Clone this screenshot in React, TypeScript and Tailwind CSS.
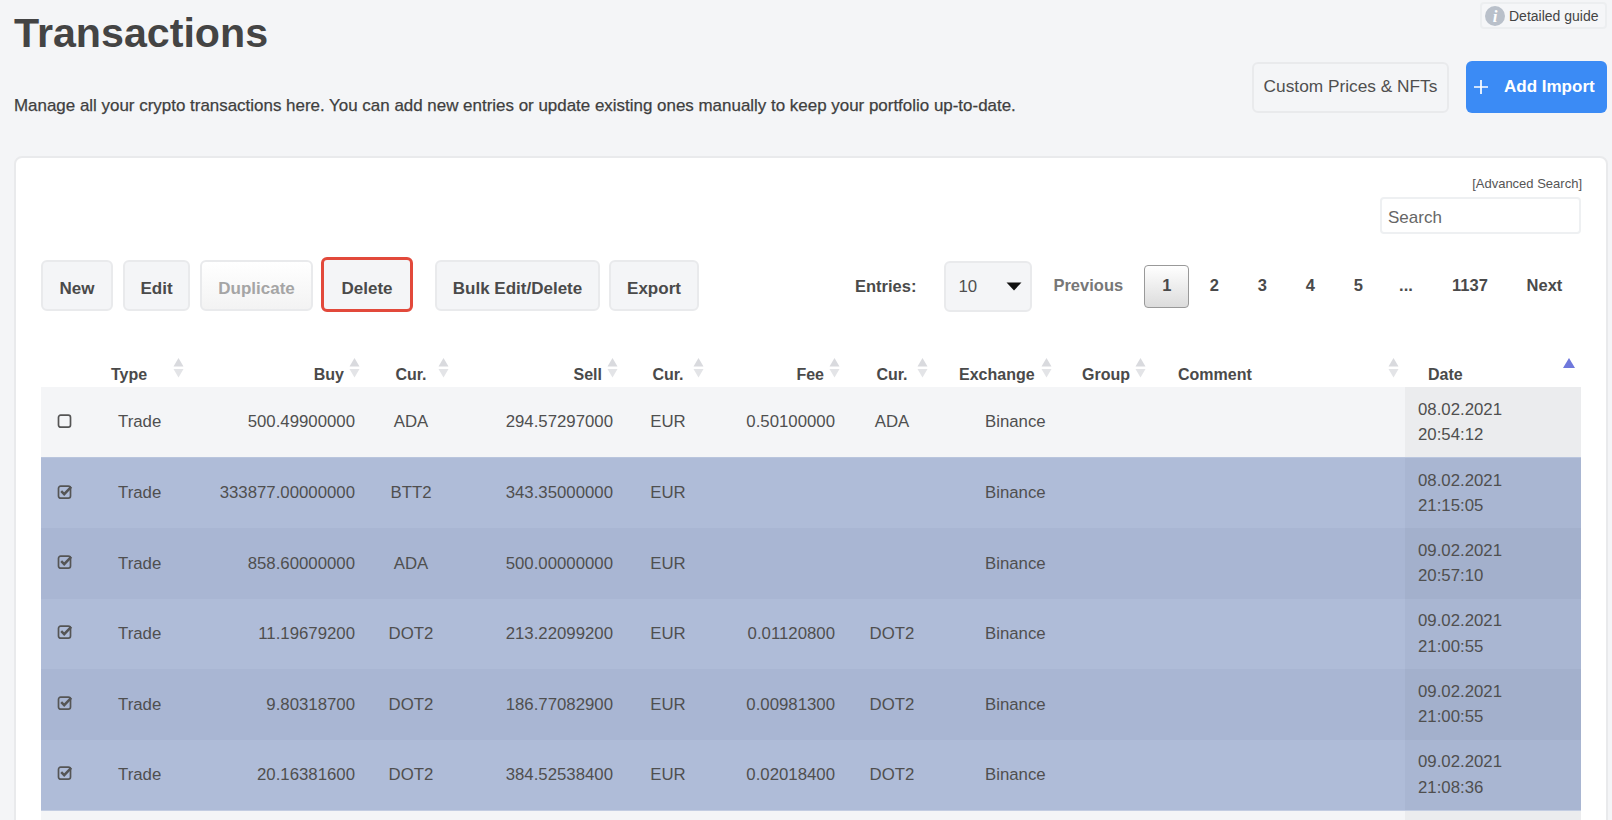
const font = "[font-family:'Liberation_Sans',Arial,sans-serif]";

function Info() {
  return (
    <svg width="20" height="20" viewBox="0 0 20 20" className="shrink-0">
      <circle cx="10" cy="10" r="10" fill="#b9c0ca" />
      <text x="10" y="16" textAnchor="middle" fontFamily="'Liberation Serif',serif" fontStyle="italic" fontWeight="700" fontSize="17" fill="#fff">i</text>
    </svg>
  );
}

function SortArrows({ right }: { right: string }) {
  return (
    <svg width="11" height="20" viewBox="0 0 11 20" className={`absolute top-[10px] ${right}`}>
      <path d="M5.5 0 L10.5 8.5 L0.5 8.5 Z" fill="#d9dade" />
      <path d="M5.5 19.5 L10.5 11 L0.5 11 Z" fill="#e3e4e7" />
    </svg>
  );
}

function Check({ on }: { on: boolean }) {
  return (
    <svg width="16" height="16" viewBox="0 0 16 16" className="block ml-[16px] -mt-[3px]">
      <rect x="1.5" y="2.2" width="12" height="12" rx="2.2" fill="none" stroke="#555" strokeWidth="1.7" />
      {on && <path d="M4.2 7.2 L7.2 10.2 L14.2 2.8" fill="none" stroke="#555" strokeWidth="2.5" />}
    </svg>
  );
}

function Btn({ children, className = "" }: { children: React.ReactNode; className?: string }) {
  return (
    <button className={`h-[51px] pt-[7px] rounded-md border-2 border-[#e9eaec] bg-[#f4f5f7] font-bold text-[#4a4a4a] text-[17px] ${className}`}>
      {children}
    </button>
  );
}

const rows = [
  { on: false, buy: "500.49900000", c1: "ADA", sell: "294.57297000", fee: "0.50100000", c3: "ADA", d: "08.02.2021", t: "20:54:12" },
  { on: true, buy: "333877.00000000", c1: "BTT2", sell: "343.35000000", fee: "", c3: "", d: "08.02.2021", t: "21:15:05" },
  { on: true, buy: "858.60000000", c1: "ADA", sell: "500.00000000", fee: "", c3: "", d: "09.02.2021", t: "20:57:10" },
  { on: true, buy: "11.19679200", c1: "DOT2", sell: "213.22099200", fee: "0.01120800", c3: "DOT2", d: "09.02.2021", t: "21:00:55" },
  { on: true, buy: "9.80318700", c1: "DOT2", sell: "186.77082900", fee: "0.00981300", c3: "DOT2", d: "09.02.2021", t: "21:00:55" },
  { on: true, buy: "20.16381600", c1: "DOT2", sell: "384.52538400", fee: "0.02018400", c3: "DOT2", d: "09.02.2021", t: "21:08:36" },
];

const rowStyle = [
  { tr: "bg-[#f4f5f7] border-b border-[#b9c5dd]", date: "bg-[#ebecee]" },
  { tr: "bg-[#afbcd8]", date: "bg-[#a9b6d2]" },
  { tr: "bg-[#a9b6d3]", date: "bg-[#a3b0cc]" },
  { tr: "bg-[#afbcd8]", date: "bg-[#a9b6d2]" },
  { tr: "bg-[#a9b6d3]", date: "bg-[#a3b0cc]" },
  { tr: "bg-[#afbcd8] border-b border-[#c3cde2]", date: "bg-[#a9b6d2]" },
];

const widths = ["w-[59px]", "w-[87px]", "w-[176px]", "w-[96px]", "w-[162px]", "w-[94px]", "w-[128px]", "w-[98px]", "w-[123px]", "w-[96px]", "w-[245px]", "w-[176px]"];

export default function App() {
  return (
    <div className={`${font} h-[820px] overflow-hidden bg-[#f4f5f7] text-[#4f4f4f] pl-[14px] pr-[5px] relative`}>
      <div className="flex justify-between h-[156px]">
        <div>
          <h1 className="mt-[7px] text-[41.2px] leading-[52px] font-bold text-[#444]">Transactions</h1>
          <p className="mt-[34px] text-[16.95px] leading-[26px] text-[#3f3f3f] [-webkit-text-stroke:0.25px_#3f3f3f]">
            Manage all your crypto transactions here. You can add new entries or update existing ones manually to keep your portfolio up-to-date.
          </p>
        </div>
        <div className="w-[360px] flex flex-col items-end">
          <div className="mt-[2px] h-[27px] w-[127px] flex items-center gap-[3px] pl-[3px] border-2 border-[#eceef0] rounded bg-[#f5f6f8] text-[14px] text-[#444]">
            <Info />
            <span className="pt-[1px] pl-[1px]">Detailed guide</span>
          </div>
          <div className="mt-[32px] flex items-center gap-[17px]">
            <button className="h-[51px] w-[197px] rounded-md border-2 border-[#e9eaec] bg-[#f4f5f7] text-[17.3px] text-[#4f4f4f]">Custom Prices &amp; NFTs</button>
            <button className="h-[52px] w-[141px] rounded-md bg-[#3b8bf5] text-white font-bold text-[17px] flex items-center pl-[7px]">
              <svg width="16" height="16" viewBox="0 0 16 16"><path d="M8 1V15M1 8H15" stroke="#fff" strokeWidth="1.7" /></svg>
              <span className="ml-[15px]">Add Import</span>
            </button>
          </div>
        </div>
      </div>

      <div className="h-[800px] -mr-[1px] rounded-lg border-2 border-[#e9eaec] bg-white pl-[25px] pr-[24px]">
        <div className="flex flex-col items-end pt-[16px]">
          <a className="text-[13px] leading-[19px] text-[#555]">[Advanced Search]</a>
          <input readOnly placeholder="Search" className="mt-[4px] mr-[1px] h-[37px] w-[201px] rounded border-2 border-[#eef0f2] px-[6px] pt-[5px] text-[17px] placeholder:text-[#666] outline-none" />
        </div>

        <div className="flex items-center mt-[23px] h-[57px]">
          <Btn className="w-[72px]">New</Btn>
          <Btn className="w-[67px] ml-[10px]">Edit</Btn>
          <Btn className="w-[113px] ml-[10px] border-[#dfe0e2] bg-gradient-to-b from-white to-[#f3f3f3] !text-[#a5a5a5]">Duplicate</Btn>
          <Btn className="w-[92px] ml-[8px] mb-[2px] pt-[9px] h-[55px] border-[3px] !border-[#e2493b] rounded-[10px]">Delete</Btn>
          <Btn className="w-[165px] ml-[22px]">Bulk Edit/Delete</Btn>
          <Btn className="w-[90px] ml-[9px]">Export</Btn>

          <span className="ml-[156px] pt-[2px] font-bold text-[16.5px] text-[#4a4a4a]">Entries:</span>
          <div className="ml-[28px] mt-[2px] h-[51px] w-[88px] rounded-md border-2 border-[#e9eaec] bg-[#f4f5f7] flex items-center justify-between pl-[12px] pr-[8px] text-[16.8px]">
            <span>10</span>
            <svg width="16" height="9" viewBox="0 0 16 9"><path d="M0.5 0.5H15.5L8 8.5Z" fill="#111" /></svg>
          </div>
          <nav className="ml-[21px] flex items-center font-bold text-[16.5px] text-[#4a4a4a] -mt-[1px]">
            <span className="w-[91px] text-[#777]">Previous</span>
            <span className="w-[45px] h-[43px] mt-[3px] pb-[3px] flex items-center justify-center rounded-sm border border-[#999] bg-gradient-to-b from-white to-[#dcdcdc]">1</span>
            <span className="w-[48px] ml-[1px] text-center">2</span>
            <span className="w-[48px] text-center">3</span>
            <span className="w-[48px] text-center">4</span>
            <span className="w-[48px] text-center">5</span>
            <span className="w-[47px] text-center">...</span>
            <span className="w-[81px] text-center">1137</span>
            <span className="w-[68px] text-center">Next</span>
          </nav>
        </div>

        <table className="mt-[34px] w-[1540px] table-fixed border-collapse text-[16.8px]">
          <colgroup>
            {widths.map((w, i) => (
              <col key={i} className={w} />
            ))}
          </colgroup>
          <thead>
            <tr className="h-[39px] text-[#4a4a4a] text-[16px]">
              <th />
              <th className="relative text-left font-bold pl-[11px] pt-[14px]">Type<SortArrows right="right-[3px]" /></th>
              <th className="relative text-right font-bold pr-[19px] pt-[14px]">Buy<SortArrows right="right-[3px]" /></th>
              <th className="relative text-center font-bold pt-[14px]">Cur.<SortArrows right="right-[10px]" /></th>
              <th className="relative text-right font-bold pr-[19px] pt-[14px]">Sell<SortArrows right="right-[3px]" /></th>
              <th className="relative text-center font-bold pt-[14px]">Cur.<SortArrows right="right-[11px]" /></th>
              <th className="relative text-right font-bold pr-[19px] pt-[14px]">Fee<SortArrows right="right-[3px]" /></th>
              <th className="relative text-center font-bold pt-[14px]">Cur.<SortArrows right="right-[13px]" /></th>
              <th className="relative text-left font-bold pl-[18px] pt-[14px]">Exchange<SortArrows right="right-[12px]" /></th>
              <th className="relative text-left font-bold pl-[18px] pt-[14px]">Group<SortArrows right="right-[14px]" /></th>
              <th className="relative text-left font-bold pl-[18px] pt-[14px]">Comment<SortArrows right="right-[6px]" /></th>
              <th className="relative text-left font-bold pl-[23px] pt-[14px]">
                Date
                <svg width="12" height="10" viewBox="0 0 12 10" className="absolute top-[10px] right-[6px]"><path d="M6 0L12 10H0Z" fill="#6f78dc" /></svg>
              </th>
            </tr>
          </thead>
          <tbody>
            {rows.map((r, i) => (
              <tr key={i} className={`h-[70.5px] ${rowStyle[i].tr}`}>
                <td><Check on={r.on} /></td>
                <td className="pl-[18px]">Trade</td>
                <td className="text-right pr-[8px]">{r.buy}</td>
                <td className="text-center">{r.c1}</td>
                <td className="text-right pr-[8px]">{r.sell}</td>
                <td className="text-center">EUR</td>
                <td className="text-right pr-[8px]">{r.fee}</td>
                <td className="text-center">{r.c3}</td>
                <td className="pl-[44px]">Binance</td>
                <td />
                <td />
                <td className={`pl-[13px] leading-[25.5px] ${rowStyle[i].date}`}>{r.d}<br />{r.t}</td>
              </tr>
            ))}
            <tr className="h-[70.5px] bg-[#f4f5f7]">
              <td colSpan={11} />
              <td className="bg-[#ebecee]" />
            </tr>
          </tbody>
        </table>
      </div>
    </div>
  );
}
